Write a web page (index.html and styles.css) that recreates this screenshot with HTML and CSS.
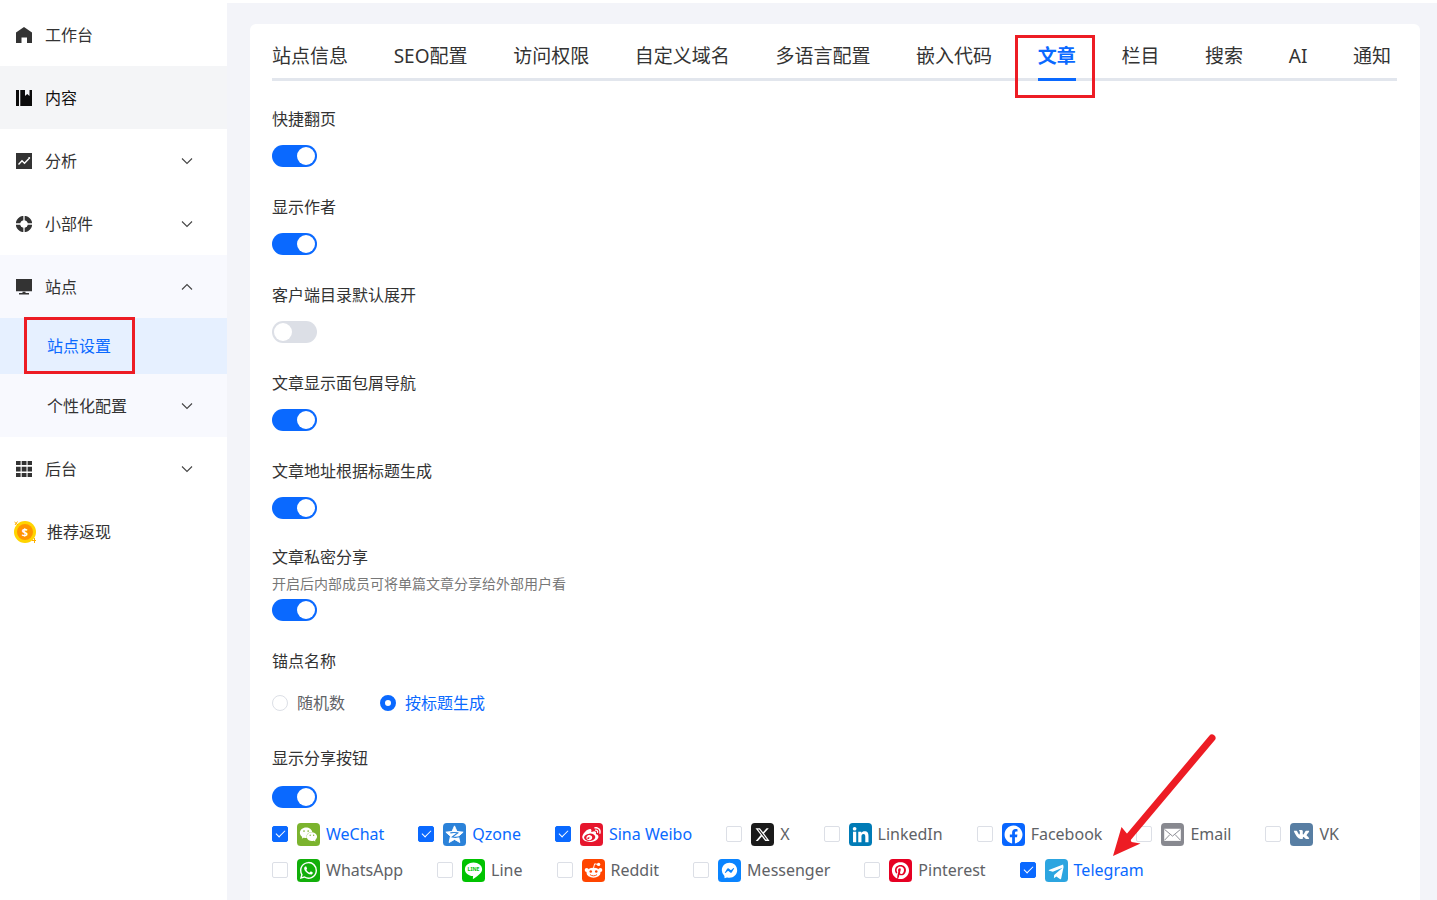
FILE: index.html
```html
<!DOCTYPE html>
<html lang="zh-CN">
<head>
<meta charset="utf-8">
<meta name="viewport" content="width=device-width, initial-scale=1">
<title>站点设置</title>
<link rel="stylesheet" href="styles.css">
</head>
<body>
<svg class="defs" aria-hidden="true">
  <symbol id="chevron" viewBox="0 0 12 12"><path d="M1 3.500l5 5 5-5" fill="none" stroke="#444" stroke-width="1.100"/></symbol>
</svg>
<div class="app">
  <nav class="sidebar" aria-label="主导航">
    <a class="item" href="#"><svg class="icon" viewBox="0 0 16 16"><path fill="#333" d="M8 0l8 5.500V16h-5v-5.500H5.500V16H0V5.500z"/></svg><span>工作台</span></a>
    <a class="item item-hover" href="#"><svg class="icon" viewBox="0 0 16 16"><path fill="#0b0b0b" d="M0 0h3v16H0zM4.300 0H9v6l2.200-2L13.500 6V0H16v16H4.300z"/></svg><span>内容</span></a>
    <button class="item" type="button"><svg class="icon" viewBox="0 0 16 16"><path fill="#333" d="M0 0h16v16H0z"/><path fill="none" stroke="#fff" stroke-width="1.400" d="M2.500 11.500L6 7.800l2.500 2.400 4.300-4.500"/><circle cx="13.200" cy="5" r="1" fill="#fff"/></svg><span>分析</span><svg class="chev"><use href="#chevron"/></svg></button>
    <button class="item" type="button"><svg class="icon" viewBox="0 0 16 16"><circle cx="8" cy="8" r="5.900" fill="none" stroke="#333" stroke-width="4.600"/><path stroke="#fff" stroke-width="1.300" d="M8 0v16M0 8h16"/><circle cx="8" cy="8" r="3.500" fill="#fff"/></svg><span>小部件</span><svg class="chev"><use href="#chevron"/></svg></button>
    <div class="group">
      <button class="item" type="button" aria-expanded="true"><svg class="icon" viewBox="0 0 16 16"><path fill="#333" d="M0 0h16v12.200H0zM3 14h10v1.500H3zM6.500 12.800h3V14h-3z"/></svg><span>站点</span><svg class="chev chev-up"><use href="#chevron"/></svg></button>
      <a class="item sub sub-active" href="#" aria-current="page"><span>站点设置</span></a>
      <button class="item sub" type="button"><span>个性化配置</span><svg class="chev"><use href="#chevron"/></svg></button>
    </div>
    <button class="item" type="button"><svg class="icon" viewBox="0 0 16 16"><path fill="#333" d="M0 0h4.600v4H0zM5.700 0h4.800v4H5.700zM11.600 0H16v4h-4.400zM0 5.800h4.600v4.800H0zM5.700 5.800h4.800v4.800H5.700zM11.600 5.800H16v4.800h-4.400zM0 12h4.600v4H0zM5.700 12h4.800v4H5.700zM11.600 12H16v4h-4.400z"/></svg><span>后台</span><svg class="chev"><use href="#chevron"/></svg></button>
    <a class="item item-coin" href="#"><svg class="coin" viewBox="0 0 22 22"><circle cx="11" cy="11" r="11" fill="#ffd400"/><circle cx="11" cy="11" r="8" fill="#ff9500"/><path d="M.5 1l3.500 3M3.500.5L1 4M20.500 17v5M18 19.500h4" stroke="#ffae00" stroke-width="1"/><text class="coin-sign" x="11" y="15" text-anchor="middle">$</text></svg><span>推荐返现</span></a>
  </nav>

  <main class="main">
    <section class="card">
      <div class="tabs" role="tablist">
        <button class="tab" role="tab" type="button">站点信息</button>
        <button class="tab" role="tab" type="button">SEO配置</button>
        <button class="tab" role="tab" type="button">访问权限</button>
        <button class="tab" role="tab" type="button">自定义域名</button>
        <button class="tab" role="tab" type="button">多语言配置</button>
        <button class="tab" role="tab" type="button">嵌入代码</button>
        <button class="tab tab-active" role="tab" type="button" aria-selected="true">文章</button>
        <button class="tab" role="tab" type="button">栏目</button>
        <button class="tab" role="tab" type="button">搜索</button>
        <button class="tab" role="tab" type="button">AI</button>
        <button class="tab" role="tab" type="button">通知</button>
      </div>

      <form class="settings">
        <div class="field"><label for="s1">快捷翻页</label><input class="switch" role="switch" type="checkbox" id="s1" checked></div>
        <div class="field"><label for="s2">显示作者</label><input class="switch" role="switch" type="checkbox" id="s2" checked></div>
        <div class="field"><label for="s3">客户端目录默认展开</label><input class="switch" role="switch" type="checkbox" id="s3"></div>
        <div class="field"><label for="s4">文章显示面包屑导航</label><input class="switch" role="switch" type="checkbox" id="s4" checked></div>
        <div class="field"><label for="s5">文章地址根据标题生成</label><input class="switch" role="switch" type="checkbox" id="s5" checked></div>
        <div class="field field-tight"><label for="s6">文章私密分享</label><p class="hint">开启后内部成员可将单篇文章分享给外部用户看</p><input class="switch" role="switch" type="checkbox" id="s6" checked></div>
        <div class="field field-radios" role="radiogroup" aria-labelledby="anchor"><span id="anchor">锚点名称</span>
          <div class="radios">
            <label class="option"><input class="radio" type="radio" name="anchor"><span>随机数</span></label>
            <label class="option"><input class="radio" type="radio" name="anchor" checked><span>按标题生成</span></label>
          </div>
        </div>
        <div class="field field-share"><label for="s7">显示分享按钮</label><input class="switch" role="switch" type="checkbox" id="s7" checked></div>
        <div class="shares">
          <div class="share-row">
            <label class="option"><input class="check" type="checkbox" checked><svg class="brand" viewBox="0 0 36 36"><rect width="36" height="36" rx="6" fill="#7bb32e"/><path transform="translate(4.500 4.500) scale(1.120)" fill="#fff" d="M8.691 2.188C3.891 2.188 0 5.476 0 9.530c0 2.212 1.170 4.203 3.002 5.550a.59.59 0 0 1 .213.665l-.39 1.480c-.019.07-.048.141-.048.213 0 .163.13.295.29.295a.326.326 0 0 0 .167-.054l1.903-1.114a.864.864 0 0 1 .717-.098 10.160 10.160 0 0 0 2.837.403c.276 0 .543-.027.811-.05-.857-2.578.157-4.972 1.932-6.446 1.703-1.415 3.882-1.980 5.853-1.838-.576-3.583-4.196-6.348-8.596-6.348zM5.785 5.991c.642 0 1.162.529 1.162 1.180a1.170 1.170 0 0 1-1.162 1.178A1.170 1.170 0 0 1 4.623 7.170c0-.651.52-1.180 1.162-1.180zm5.813 0c.642 0 1.162.529 1.162 1.180a1.170 1.170 0 0 1-1.162 1.178 1.170 1.170 0 0 1-1.162-1.178c0-.651.52-1.180 1.162-1.180zm5.340 2.867c-1.797-.052-3.746.512-5.280 1.786-1.720 1.428-2.687 3.720-1.780 6.220.942 2.453 3.666 4.229 6.884 4.229.826 0 1.622-.12 2.361-.336a.722.722 0 0 1 .598.082l1.584.926a.272.272 0 0 0 .14.047c.134 0 .24-.111.24-.247 0-.06-.023-.12-.038-.177l-.327-1.233a.582.582 0 0 1-.023-.156.49.49 0 0 1 .201-.398C23.024 18.480 24 16.820 24 14.980c0-3.210-2.931-5.837-6.656-6.088V8.890c-.135-.01-.27-.027-.407-.03zm-2.530 3.274c.535 0 .969.44.969.982a.976.976 0 0 1-.969.983.976.976 0 0 1-.969-.983c0-.542.434-.982.97-.982zm4.844 0c.535 0 .969.44.969.982a.976.976 0 0 1-.969.983.976.976 0 0 1-.969-.983c0-.542.434-.982.969-.982z"/></svg><span>WeChat</span></label>
            <label class="option"><input class="check" type="checkbox" checked><svg class="brand" viewBox="0 0 36 36"><rect width="36" height="36" rx="6" fill="#2b82d9"/><path fill="#fff" stroke="#fff" stroke-width="1.500" stroke-linejoin="round" d="M18 4.500l3.900 8.800 9.600 1-7.200 6.400 2.100 9.800L18 25.700l-8.400 4.800 2.100-9.800-7.200-6.400 9.600-1z"/><path fill="none" stroke="#2b82d9" stroke-width="1.700" d="M11.500 15.500c4-.8 8-.8 11.500 0l-8.500 6.500c4 .8 8 .7 13-.8"/></svg><span>Qzone</span></label>
            <label class="option"><input class="check" type="checkbox" checked><svg class="brand" viewBox="0 0 36 36"><rect width="36" height="36" rx="6" fill="#e6162d"/><path transform="translate(3.500 3.500) scale(1.210)" fill="#fff" d="M10.098 20.323c-3.977.391-7.414-1.406-7.672-4.020-.259-2.609 2.759-5.047 6.740-5.441 3.979-.394 7.413 1.404 7.671 4.018.259 2.600-2.759 5.049-6.737 5.439l-.002.004zM9.050 17.219c-.384.616-1.208.884-1.829.602-.612-.279-.793-.991-.406-1.593.379-.595 1.176-.861 1.793-.601.622.263.82.972.442 1.592zm1.270-1.627c-.141.237-.449.353-.689.253-.236-.09-.313-.361-.177-.586.138-.227.436-.346.672-.24.239.09.315.36.18.601l.014-.028zm.176-2.719c-1.893-.493-4.033.45-4.857 2.118-.836 1.704-.026 3.591 1.886 4.210 1.983.64 4.318-.341 5.132-2.179.8-1.793-.201-3.642-2.161-4.149zm7.563-1.224c-.346-.105-.57-.18-.405-.615.375-.977.42-1.804 0-2.404-.781-1.112-2.915-1.053-5.364-.03 0 0-.766.331-.571-.271.376-1.217.315-2.224-.27-2.809-1.338-1.337-4.869.045-7.888 3.080C1.309 10.870 0 13.273 0 15.348c0 3.981 5.099 6.395 10.086 6.395 6.536 0 10.888-3.801 10.888-6.820 0-1.822-1.547-2.854-2.915-3.284v.01zm1.908-5.092c-.766-.856-1.908-1.187-2.960-.962-.436.09-.706.511-.616.932.09.42.511.691.932.602.511-.105 1.067.044 1.442.465.376.421.466.977.316 1.473-.136.406.089.856.51.992.405.119.857-.105.992-.512.33-1.021.12-2.178-.646-3.035l.03.045zm2.418-2.195c-1.576-1.757-3.905-2.419-6.054-1.968-.496.104-.812.587-.706 1.081.104.496.586.813 1.082.707 1.532-.331 3.185.15 4.296 1.383 1.112 1.246 1.429 2.943.947 4.416-.165.48.106 1.007.586 1.157.479.165.991-.104 1.157-.586.675-2.088.241-4.478-1.338-6.235l.03.045z"/></svg><span>Sina Weibo</span></label>
            <label class="option"><input class="check" type="checkbox"><svg class="brand" viewBox="0 0 36 36"><rect width="36" height="36" rx="6" fill="#1a1a1a"/><path transform="translate(7 7) scale(.92)" fill="#fff" d="M18.901 1.153h3.680l-8.040 9.190L24 22.846h-7.406l-5.800-7.584-6.638 7.584H.474l8.600-9.830L0 1.154h7.594l5.243 6.932ZM17.610 20.644h2.039L6.486 3.240H4.298Z"/></svg><span>X</span></label>
            <label class="option"><input class="check" type="checkbox"><svg class="brand" viewBox="0 0 36 36"><rect width="36" height="36" rx="6" fill="#007bb6"/><circle cx="8.800" cy="9" r="2.900" fill="#fff"/><path fill="#fff" d="M6.300 13.500h5V30h-5zM14.500 13.500h4.800v2.300c1-1.800 2.800-2.800 5-2.800 5 0 6.200 3.200 6.200 7.600V30h-5v-8.200c0-2.200-.2-4.500-2.900-4.500s-3.100 2.200-3.100 4.400V30h-5z"/></svg><span>LinkedIn</span></label>
            <label class="option"><input class="check" type="checkbox"><svg class="brand" viewBox="0 0 36 36"><rect width="36" height="36" rx="6" fill="#0866ff"/><path transform="translate(4 4) scale(1.170)" fill="#fff" d="M24 12.073c0-6.627-5.373-12-12-12s-12 5.373-12 12c0 5.990 4.388 10.954 10.125 11.854v-8.385H7.078v-3.470h3.047V9.430c0-3.007 1.792-4.669 4.533-4.669 1.312 0 2.686.235 2.686.235v2.953H15.830c-1.491 0-1.956.925-1.956 1.874v2.250h3.328l-.532 3.470h-2.796v8.385C19.612 23.027 24 18.062 24 12.073z"/></svg><span>Facebook</span></label>
            <label class="option"><input class="check" type="checkbox"><svg class="brand" viewBox="0 0 36 36"><rect width="36" height="36" rx="6" fill="#888990"/><rect x="5" y="9" width="26" height="19" fill="#fff"/><path fill="none" stroke="#888990" stroke-width="1.500" d="M5.500 10L18 20.500 30.500 10M5.500 27l8.500-9M30.500 27L22 18"/></svg><span>Email</span></label>
            <label class="option"><input class="check" type="checkbox"><svg class="brand" viewBox="0 0 36 36"><rect width="36" height="36" rx="6" fill="#587ea3"/><path transform="translate(6 6)" fill="#fff" d="M13.162 18.994c.609 0 .858-.406.851-.915-.031-1.917.714-2.949 2.059-1.604 1.488 1.488 1.796 2.519 3.603 2.519h3.200c.808 0 1.126-.26 1.126-.668 0-.863-1.421-2.386-2.625-3.504-1.686-1.565-1.765-1.602-.313-3.486 1.801-2.339 4.157-5.336 2.073-5.336h-3.981c-.772 0-.828.435-1.103 1.083-.995 2.347-2.886 5.387-3.604 4.922-.751-.485-.407-2.406-.35-5.261.015-.754.011-1.271-1.141-1.539-.629-.145-1.241-.205-1.809-.205-2.273 0-3.841.953-2.950 1.119 1.571.293 1.420 3.692 1.054 5.160-.638 2.556-3.036-2.024-4.035-4.305-.241-.548-.315-.974-1.175-.974h-3.255c-.492 0-.787.16-.787.516 0 .602 2.960 6.720 5.786 9.770 2.756 2.975 5.480 2.708 7.376 2.708z"/></svg><span>VK</span></label>
          </div>
          <div class="share-row">
            <label class="option"><input class="check" type="checkbox"><svg class="brand" viewBox="0 0 36 36"><rect width="36" height="36" rx="6" fill="#12af0a"/><path transform="translate(4.500 4.500) scale(1.120)" fill="#fff" d="M17.472 14.382c-.297-.149-1.758-.867-2.030-.967-.273-.099-.471-.148-.67.15-.197.297-.767.966-.94 1.164-.173.199-.347.223-.644.075-.297-.15-1.255-.463-2.390-1.475-.883-.788-1.480-1.761-1.653-2.059-.173-.297-.018-.458.13-.606.134-.133.298-.347.446-.52.149-.174.198-.298.298-.497.099-.198.05-.371-.025-.52-.075-.149-.669-1.612-.916-2.207-.242-.579-.487-.5-.669-.51-.173-.008-.371-.01-.57-.01-.198 0-.52.074-.792.372-.272.297-1.040 1.016-1.040 2.479 0 1.462 1.065 2.875 1.213 3.074.149.198 2.096 3.200 5.077 4.487.709.306 1.262.489 1.694.625.712.227 1.360.195 1.871.118.571-.085 1.758-.719 2.006-1.413.248-.694.248-1.289.173-1.413-.074-.124-.272-.198-.57-.347m-5.421 7.403h-.004a9.870 9.870 0 0 1-5.031-1.378l-.361-.214-3.741.982.998-3.648-.235-.374a9.860 9.860 0 0 1-1.510-5.260c.001-5.450 4.436-9.884 9.888-9.884 2.640 0 5.122 1.030 6.988 2.898a9.825 9.825 0 0 1 2.893 6.994c-.003 5.450-4.437 9.884-9.885 9.884m8.413-18.297A11.815 11.815 0 0 0 12.050 0C5.495 0 .16 5.335.157 11.892c0 2.096.547 4.142 1.588 5.945L.057 24l6.305-1.654a11.882 11.882 0 0 0 5.683 1.448h.005c6.554 0 11.890-5.335 11.893-11.893a11.821 11.821 0 0 0-3.480-8.413Z"/></svg><span>WhatsApp</span></label>
            <label class="option"><input class="check" type="checkbox"><svg class="brand" viewBox="0 0 36 36"><rect width="36" height="36" rx="6" fill="#00c300"/><path fill="#fff" d="M18 5.500c7.500 0 13.500 4.700 13.500 10.600 0 3.500-2.200 6-5.200 8.600-2.800 2.400-6 4.900-8.300 6.300-.8.400-1.200 0-1-.8l.4-3.400C10 26.600 4.500 22 4.500 16.100 4.500 10.200 10.500 5.500 18 5.500z"/><text class="line-logo" x="18" y="19" text-anchor="middle">LINE</text></svg><span>Line</span></label>
            <label class="option"><input class="check" type="checkbox"><svg class="brand" viewBox="0 0 36 36"><rect width="36" height="36" rx="6" fill="#ff4500"/><g fill="#fff"><ellipse cx="18" cy="21.500" rx="11" ry="8"/><circle cx="7.300" cy="17.300" r="3.100"/><circle cx="28.700" cy="17.300" r="3.100"/><circle cx="26" cy="8.500" r="2.600"/></g><path d="M18 14l1.800-6.500 5 1" fill="none" stroke="#fff" stroke-width="1.500"/><circle cx="13.700" cy="19.500" r="2" fill="#ff4500"/><circle cx="22.300" cy="19.500" r="2" fill="#ff4500"/><path d="M13 24.800c2.800 2.200 7.200 2.200 10 0" fill="none" stroke="#ff4500" stroke-width="1.400" stroke-linecap="round"/></svg><span>Reddit</span></label>
            <label class="option"><input class="check" type="checkbox"><svg class="brand" viewBox="0 0 36 36"><rect width="36" height="36" rx="6" fill="#0a84ff"/><path transform="translate(6 6)" fill="#fff" d="M.001 11.639C.001 4.949 5.241 0 12.001 0S24 4.950 24 11.639c0 6.689-5.240 11.638-12 11.638-1.210 0-2.380-.16-3.470-.46a.96.96 0 0 0-.64.05l-2.390 1.050a.96.96 0 0 1-1.350-.85l-.07-2.140a.97.97 0 0 0-.32-.68A11.390 11.389 0 0 1 .002 11.640zm8.320-2.190l-3.520 5.600c-.35.53.32 1.139.82.75l3.790-2.870c.26-.2.6-.2.87 0l2.800 2.100c.84.63 2.040.4 2.600-.48l3.520-5.600c.35-.53-.32-1.130-.82-.75l-3.790 2.870c-.25.2-.6.2-.86 0l-2.800-2.100a1.800 1.800 0 0 0-2.610.48z"/></svg><span>Messenger</span></label>
            <label class="option"><input class="check" type="checkbox"><svg class="brand" viewBox="0 0 36 36"><rect width="36" height="36" rx="6" fill="#e60023"/><path transform="translate(4.500 4.500) scale(1.120)" fill="#fff" d="M12.017 0C5.396 0 .029 5.367.029 11.987c0 5.079 3.158 9.417 7.618 11.162-.105-.949-.199-2.403.041-3.439.219-.937 1.406-5.957 1.406-5.957s-.359-.72-.359-1.781c0-1.663.967-2.911 2.168-2.911 1.024 0 1.518.769 1.518 1.688 0 1.029-.653 2.567-.992 3.992-.285 1.193.6 2.165 1.775 2.165 2.128 0 3.768-2.245 3.768-5.487 0-2.861-2.063-4.869-5.008-4.869-3.410 0-5.409 2.562-5.409 5.199 0 1.033.394 2.143.889 2.741.099.12.112.225.085.345-.09.375-.293 1.199-.334 1.363-.053.225-.172.271-.401.165-1.495-.69-2.433-2.878-2.433-4.646 0-3.776 2.748-7.252 7.920-7.252 4.158 0 7.392 2.967 7.392 6.923 0 4.135-2.607 7.462-6.233 7.462-1.214 0-2.354-.629-2.758-1.379l-.749 2.848c-.269 1.045-1.004 2.352-1.498 3.146 1.123.345 2.306.535 3.550.535 6.607 0 11.985-5.365 11.985-11.987C23.970 5.390 18.592.026 11.985.026L12.017 0z"/></svg><span>Pinterest</span></label>
            <label class="option option-marked"><input class="check" type="checkbox" checked><svg class="brand" viewBox="0 0 36 36"><rect width="36" height="36" rx="6" fill="#2ca5e0"/><path transform="translate(3.500 4) scale(1.200)" fill="#fff" d="M20.665 3.717l-17.730 6.837c-1.210.486-1.203 1.161-.222 1.462l4.552 1.420L20 8l-11 9.500-.3 4.300 3.200-2.400 4.600 3.400c.85.47 1.460.23 1.670-.78l3.020-14.230c.31-2.240-.47-2.800-.525-4.073z"/></svg><span>Telegram</span>
              <svg class="arrow" viewBox="0 0 110 124" aria-hidden="true"><path d="M102 4L17 105" stroke="#ed1c24" stroke-width="7" stroke-linecap="round"/><path fill="#ed1c24" d="M3 122L11.500 93l7 8.500 3 6.500 9 1.500z"/></svg>
            </label>
          </div>
        </div>
      </form>
    </section>
  </main>
</div>
</body>
</html>
```
FILE: styles.css
```css
*, *::before, *::after { box-sizing: border-box; }
body {
  margin: 0;
  color: #333;
  background: #f3f4f9;
  font: 16px/24px "Noto Sans", "Noto Sans CJK SC", sans-serif;
}
button { font: inherit; color: inherit; border: 0; background: none; padding: 0; text-align: left; cursor: pointer; }
a { color: inherit; text-decoration: none; }
.defs { display: none; }

.app { display: flex; min-height: 100vh; }

/* Sidebar */
.sidebar {
  display: flex;
  flex-direction: column;
  flex: none;
  width: 227px;
  padding-top: 3px;
  background: #fff;
}
.item {
  display: flex;
  align-items: center;
  gap: 13px;
  width: 100%;
  height: 63px;
  padding: 0 34px 0 16px;
}
.item-hover { background: #f4f5f7; color: #111; }
.group { background: #f8f9fe; }
.sub { padding-left: 47px; }
.sub-active { position: relative; height: 56px; background: #e6f0ff; color: #0a69ff; }
.sub-active::after {
  content: "";
  position: absolute;
  inset: -1px auto 0 24px;
  width: 111px;
  border: 3px solid #ed1c24;
}
.icon { width: 16px; height: 16px; flex: none; }
.chev { width: 12px; height: 12px; margin-left: auto; }
.chev-up { transform: rotate(180deg); }
.item-coin { gap: 11px; padding-left: 14px; }
.coin { width: 22px; height: 22px; flex: none; }
.coin-sign { font: bold 11px "Noto Sans", sans-serif; fill: #fff; }

/* Main area */
.main {
  display: flex;
  flex: 1;
  min-width: 0;
  padding: 21px 17px 0 23px;
  border-top: 3px solid #fff;
}
.card {
  flex: 1;
  min-width: 0;
  padding: 11px 23px 17px 22px;
  background: #fff;
  border-radius: 6px 6px 0 0;
}

/* Tabs */
.tabs {
  display: flex;
  justify-content: space-between;
  padding-right: 6px;
  border-bottom: 3px solid #e2e6ed;
}
.tab {
  position: relative;
  height: 43px;
  font-size: 19px;
  line-height: 43px;
  white-space: nowrap;
}
.tab-active { color: #0a69ff; font-weight: bold; }
.tab-active::before {
  content: "";
  position: absolute;
  inset: auto 0 -3px;
  height: 3px;
  background: #0a69ff;
}
.tab-active::after {
  content: "";
  position: absolute;
  inset: 0 -19px -20px -23px;
  border: 3px solid #ed1c24;
}

/* Settings */
.settings { display: flex; flex-direction: column; gap: 28px; padding-top: 26px; }
.field { display: flex; flex-direction: column; align-items: flex-start; gap: 14px; }
.field-tight { gap: 5px; margin-top: -2px; }
.field-radios { gap: 18px; }
.field-share { gap: 16px; margin-top: 3px; }
.hint { margin: 0; color: #777; font-size: 14px; line-height: 20px; }
.radios { display: flex; gap: 35px; }
.option { display: flex; align-items: center; color: #606266; white-space: nowrap; }
.option:has(input:checked) { color: #0a69ff; }

.switch {
  appearance: none;
  width: 45px;
  height: 22px;
  margin: 0;
  padding: 2px;
  border-radius: 11px;
  background: #dcdfe6;
}
.switch::before {
  content: "";
  display: block;
  width: 18px;
  height: 18px;
  border-radius: 50%;
  background: #fff;
}
.switch:checked { background: #0a69ff; }
.switch:checked::before { margin-left: auto; }

.radio, .check {
  appearance: none;
  flex: none;
  width: 16px;
  height: 16px;
  margin: 0 9px 0 0;
  border: 1px solid #dcdfe6;
  background: #fff;
}
.radio { border-radius: 50%; }
.radio:checked { border: 5px solid #0a69ff; }
.check { border-radius: 2px; }
.check:checked { border-color: #0a69ff; background: #0a69ff; }
.check:checked::before {
  content: "";
  display: block;
  width: 9px;
  height: 5px;
  margin: 3px 0 0 3px;
  border: solid #fff;
  border-width: 0 0 1px 1px;
  transform: rotate(-45deg);
}

.shares { display: flex; flex-direction: column; gap: 12px; margin-top: -14px; }
.share-row { display: flex; gap: 34px; }
.brand { flex: none; width: 23px; height: 23px; margin-right: 6px; }
.line-logo { font: bold 8px "Noto Sans", sans-serif; fill: #00c300; }
.option-marked { position: relative; }
.arrow { position: absolute; left: 90px; bottom: 100%; width: 110px; height: 124px; pointer-events: none; }
```
